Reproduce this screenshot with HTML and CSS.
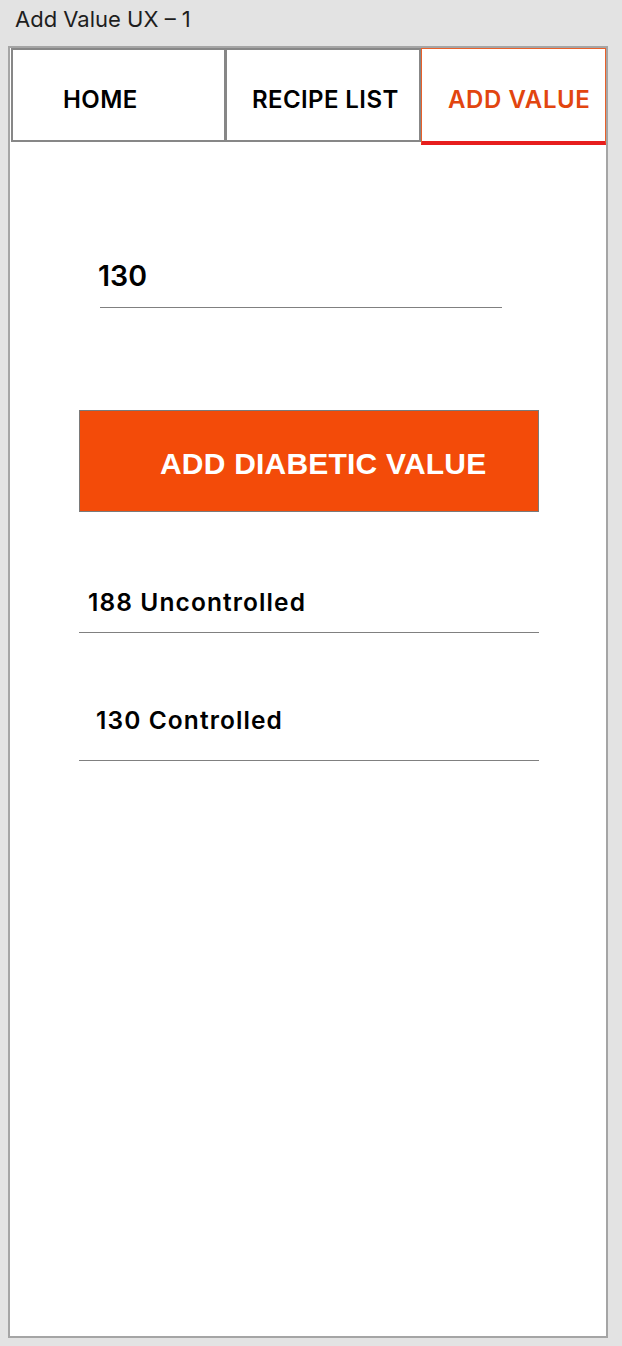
FILE: index.html
```html
<!DOCTYPE html>
<html>
<head>
<meta charset="utf-8">
<link rel="stylesheet" href="styles.css">
</head>
<body>
<div class="title">Add Value UX – 1</div>
<div class="frame">
  <nav class="tabs">
    <div class="tab tab-home">HOME</div>
    <div class="tab tab-recipe">RECIPE LIST</div>
    <div class="tab tab-add active">ADD VALUE</div>
  </nav>
  <main class="content">
    <div class="input-row"><span class="input-value">130</span></div>
    <button class="add-btn">ADD DIABETIC VALUE</button>
    <ul class="values">
      <li class="value-row row-1">188 Uncontrolled</li>
      <li class="value-row row-2">130 Controlled</li>
    </ul>
  </main>
</div>
</body>
</html>
```

FILE: styles.css
```css
html, body {
  margin: 0;
  padding: 0;
  background: #e3e3e3;
}
body {
  width: 622px;
  height: 1346px;
  overflow: hidden;
}
.title {
  height: 46px;
  box-sizing: border-box;
  padding: 6px 0 0 15px;
  font-family: Inter, Roboto, sans-serif;
  font-size: 22px;
  line-height: 26px;
  color: #1e1e1e;
}
.frame {
  margin-left: 8px;
  width: 600px;
  height: 1292px;
  box-sizing: border-box;
  border: 2px solid #a5a5a5;
  background: #fff;
}
.tabs {
  display: flex;
  height: 94px;
  padding-left: 1px;
}
.tab {
  box-sizing: border-box;
  height: 94px;
  padding-top: 8px;
  border: 2px solid #878787;
  display: flex;
  align-items: center;
  font-family: Inter, "Open Sans", sans-serif;
  font-weight: 600;
  font-size: 24px;
  color: #000;
  letter-spacing: 0.4px;
}
.tab-home {
  width: 215px;
  padding-left: 50px;
}
.tab-recipe {
  width: 195px;
  padding-left: 25px;
  border-left-width: 1px;
}
.tab-add {
  width: 185px;
  padding-left: 26px;
  border: 1px solid #e8602a;
  border-bottom: 4px solid #e71d1d;
  height: 97px;
  padding-top: 8px;
  color: #e2450f;
  letter-spacing: 0.6px;
}
.content {
  display: flex;
  flex-direction: column;
  padding-left: 69px;
}
.input-row {
  margin-top: 112px;
  margin-left: 21px;
  width: 402px;
  height: 54px;
  border-bottom: 1px solid #808080;
  box-sizing: border-box;
}
.input-value {
  display: block;
  margin-left: -2px;
  font-family: Inter, sans-serif;
  font-weight: 600;
  font-size: 28.5px;
  line-height: 32px;
  padding-top: 6px;
  color: #000;
}
.add-btn {
  margin-top: 102px;
  width: 460px;
  height: 102px;
  box-sizing: border-box;
  border: 1px solid #7a7a7a;
  background: #f34b09;
  color: #fff;
  font-family: "Liberation Sans", Arial, sans-serif;
  font-weight: 700;
  font-size: 30px;
  letter-spacing: 0.2px;
  padding: 5px 0 0 80px;
  text-align: left;
  line-height: 1;
}
.values {
  list-style: none;
  margin: 0;
  padding: 0;
  width: 460px;
}
.value-row {
  box-sizing: border-box;
  border-bottom: 1px solid #808080;
  font-family: Inter, sans-serif;
  font-weight: 600;
  font-size: 24.5px;
  letter-spacing: 1.1px;
  line-height: 28px;
  color: #000;
}
.row-1 {
  margin-top: 64px;
  height: 57px;
  padding-left: 9px;
  padding-top: 12px;
}
.row-2 {
  height: 128px;
  padding-left: 17px;
  padding-top: 73px;
}
```
